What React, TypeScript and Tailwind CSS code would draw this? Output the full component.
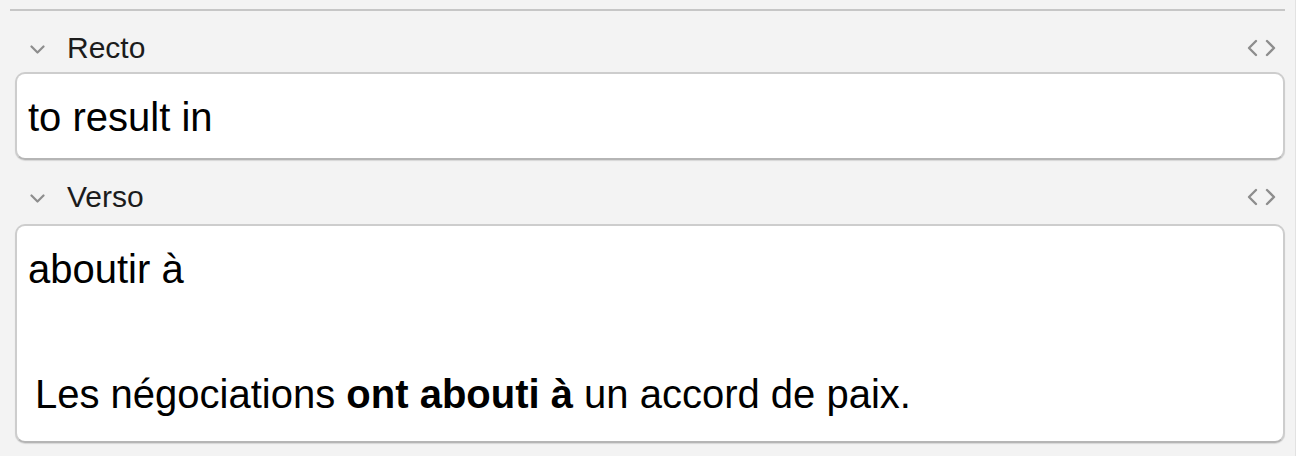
import React from 'react';

const ChevronDown = () => (
  <svg width="15" height="9" viewBox="0 0 15 9" fill="none">
    <path d="M1.5 1.5 L7.5 7.5 L13.5 1.5" stroke="#8d8d8d" strokeWidth="2.2" strokeLinecap="round" strokeLinejoin="round" />
  </svg>
);

const CodeIcon = () => (
  <svg width="30" height="18" viewBox="0 0 30 18" fill="none">
    <path d="M9 2 L2 9 L9 16" stroke="#8d8d8d" strokeWidth="2.4" strokeLinecap="round" strokeLinejoin="round" />
    <path d="M20 2 L27 9 L20 16" stroke="#8d8d8d" strokeWidth="2.4" strokeLinecap="round" strokeLinejoin="round" />
  </svg>
);

function FieldHeader({ label, className }: { label: string; className?: string }) {
  return (
    <div className={`flex items-center h-[40px] ${className ?? ''}`}>
      <div className="w-[52px] flex justify-start pl-[15px] pt-[2px]">
        <ChevronDown />
      </div>
      <span className="text-[30px] text-[#1c1c1c] leading-none">{label}</span>
      <div className="ml-auto mr-[8px]">
        <CodeIcon />
      </div>
    </div>
  );
}

export default function App() {
  return (
    <div
      className="w-[1296px] h-[456px] bg-[#f3f3f3] border-r border-[#e2e2e2] overflow-hidden"
      style={{ fontFamily: '"Liberation Sans", Arial, sans-serif' }}
    >
      <div className="pt-[9px] px-[10px]">
        <div className="h-[2px] bg-[#c6c6c6]" />
      </div>

      <div className="pl-[15px] pr-[10px]">
        <FieldHeader label="Recto" className="mt-[17px] mb-[4px]" />
        <div className="h-[88px] bg-white rounded-[10px] border-2 border-[#cdcdcd] border-b-[#b5b5b5] shadow-[0_1px_1px_rgba(0,0,0,0.12)] pl-[11px] pt-[20px] text-[40px] leading-[46px] text-black">
          to result in
        </div>

        <FieldHeader label="Verso" className="mt-[17px] mb-[7px]" />
        <div className="h-[219px] bg-white rounded-[10px] border-2 border-[#cdcdcd] border-b-[#b5b5b5] shadow-[0_1px_1px_rgba(0,0,0,0.12)] pl-[11px] pt-[20px] text-[40px] leading-[46px] text-black">
          <div>aboutir à</div>
          <div className="mt-[79px] pl-[7px]">
            Les négociations <b>ont abouti à</b> un accord de paix.
          </div>
        </div>
      </div>
    </div>
  );
}
